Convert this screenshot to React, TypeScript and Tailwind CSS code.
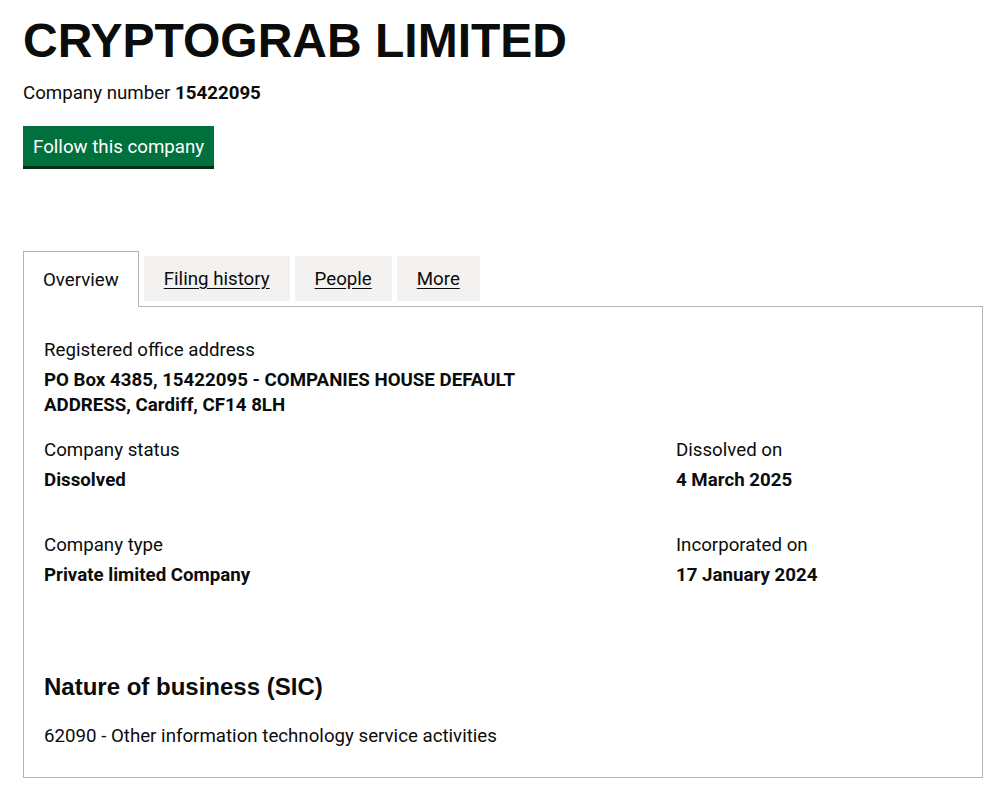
import React from "react";

const body = "font-['Roboto',_'Liberation_Sans',_sans-serif]";
const head = "font-['Liberation_Sans',_Arial,_sans-serif]";

const Field = ({ label, value }: { label: string; value: React.ReactNode }) => (
    <div>
        <div className="text-[18.7px] leading-[25px]">{label}</div>
        <div className="mt-[5px] text-[18.7px] leading-[25px] font-bold">{value}</div>
    </div>
);

const App = () => {
    return (
        <div className={`min-h-screen bg-white text-[#0b0c0c] ${body}`}>
            <div className="px-[23px] pt-[16px] pb-[13px]">
                <h1 className={`${head} text-[48px] leading-[50px] font-bold`}>CRYPTOGRAB LIMITED</h1>
                <p className="mt-[15px] text-[18.7px] leading-[25px]">
                    Company number <strong className="font-bold">15422095</strong>
                </p>
                <button className="mt-[20px] inline-flex items-center bg-[#00703c] px-[10px] pt-[2px] h-[40px] text-[18.7px] leading-[25px] text-white shadow-[0_3px_0_#002d18]">
                    Follow this company
                </button>

                <div className="mt-[85px]">
                    <ul className="flex items-start gap-[5px] text-[18.7px] leading-[25px]">
                        <li className="relative z-10 -mb-px h-[56px] border border-b-0 border-[#b1b4b6] bg-white px-[19px] pt-[16px]">
                            Overview
                        </li>
                        <li className="mt-[5px] h-[45px] bg-[#f3f2f1] px-[20px] pt-[11px]">
                            <a href="#" className="underline underline-offset-[3px]">Filing history</a>
                        </li>
                        <li className="mt-[5px] h-[45px] bg-[#f3f2f1] px-[20px] pt-[11px]">
                            <a href="#" className="underline underline-offset-[3px]">People</a>
                        </li>
                        <li className="mt-[5px] h-[45px] bg-[#f3f2f1] px-[20px] pt-[11px]">
                            <a href="#" className="underline underline-offset-[3px]">More</a>
                        </li>
                    </ul>

                    <div className="w-[960px] border border-[#b1b4b6] px-[20px] pt-[31px] pb-[28px]">
                        <div className="w-[560px]">
                            <Field
                                label="Registered office address"
                                value="PO Box 4385, 15422095 - COMPANIES HOUSE DEFAULT ADDRESS, Cardiff, CF14 8LH"
                            />
                        </div>

                        <div className="mt-[20px] grid grid-cols-[632px_1fr] gap-y-[40px]">
                            <Field label="Company status" value="Dissolved" />
                            <Field label="Dissolved on" value="4 March 2025" />
                            <Field label="Company type" value="Private limited Company" />
                            <Field label="Incorporated on" value="17 January 2024" />
                        </div>

                        <h2 className={`${head} mt-[84px] text-[24px] leading-[30px] font-bold`}>Nature of business (SIC)</h2>
                        <p className="mt-[22px] text-[18.7px] leading-[25px]">62090 - Other information technology service activities</p>
                    </div>
                </div>
            </div>
        </div>
    );
};

export default App;
